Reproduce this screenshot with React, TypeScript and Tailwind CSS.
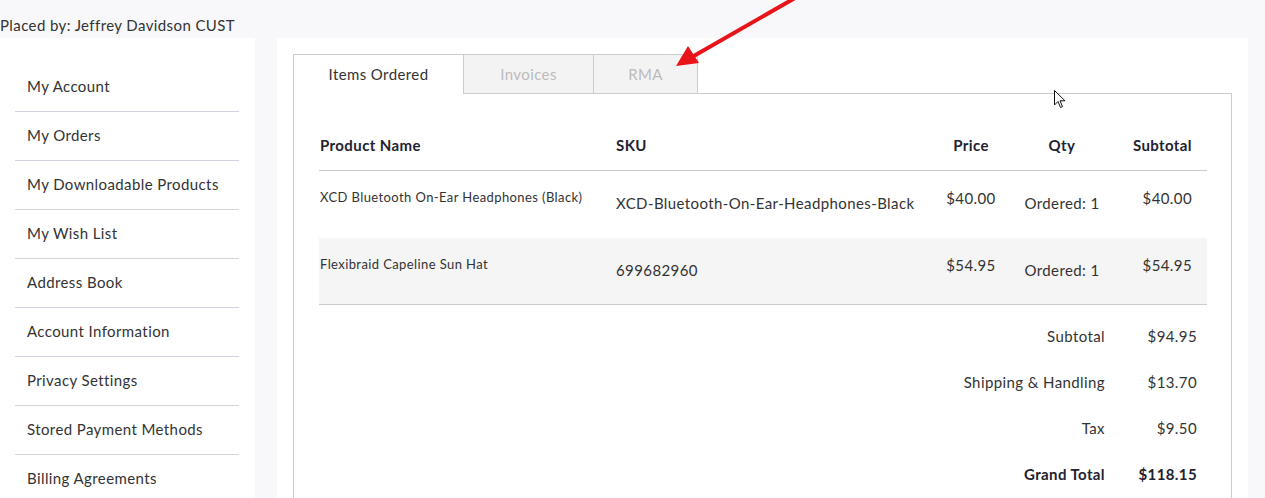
import React from 'react';

const navItems = [
  'My Account',
  'My Orders',
  'My Downloadable Products',
  'My Wish List',
  'Address Book',
  'Account Information',
  'Privacy Settings',
  'Stored Payment Methods',
  'Billing Agreements',
];

const items = [
  { name: 'XCD Bluetooth On-Ear Headphones (Black)', sku: 'XCD-Bluetooth-On-Ear-Headphones-Black', price: '$40.00', qty: 1, subtotal: '$40.00' },
  { name: 'Flexibraid Capeline Sun Hat', sku: '699682960', price: '$54.95', qty: 1, subtotal: '$54.95' },
];

const totals = [
  { label: 'Subtotal', value: '$94.95' },
  { label: 'Shipping & Handling', value: '$13.70' },
  { label: 'Tax', value: '$9.50' },
];

export default function App() {
  return (
    <div className="relative h-[498px] overflow-hidden bg-[#f8f8fa] font-['Lato','Liberation_Sans',sans-serif] tracking-[0.4px] text-[#333]">
      {/* Header */}
      <div className="h-[38px] pt-[16px] text-[15px] leading-[18px] text-[#333]">
        Placed by: Jeffrey Davidson CUST
      </div>

      <div className="flex gap-[22px]">
        {/* Sidebar */}
        <div className="w-[255px] shrink-0 bg-white pt-[25px] pl-[15px] pr-[16px] h-[460px]">
          {navItems.map((n) => (
            <div key={n} className="h-[49px] flex items-center pl-[12px] pb-[1px] border-b border-[#d3d3de] text-[15px] text-[#333]">
              {n}
            </div>
          ))}
        </div>

        {/* Main */}
        <div className="w-[971px] shrink-0 bg-white pt-[16px] px-[16px] h-[460px]">
          <div className="flex h-[40px]">
            <div className="w-[171px] flex items-center justify-center border-l border-t border-r border-[#cccccc] bg-white text-[15px] text-[#333]">
              Items Ordered
            </div>
            <div className="w-[130px] flex items-center justify-center border-t border-r border-b border-[#cccccc] bg-[#f3f3f3] text-[15px] text-[#bbbbbb]">
              Invoices
            </div>
            <div className="w-[104px] flex items-center justify-center border-t border-r border-b border-[#cccccc] bg-[#f3f3f3] text-[15px] text-[#bbbbbb]">
              RMA
            </div>
            <div className="flex-1 border-b border-[#cccccc]" />
          </div>

          <div className="border-l border-r border-[#cccccc] h-[420px] pl-[25px] pr-[24px] pt-[27px]">
            {/* Table header */}
            <div className="grid grid-cols-[297px_314px_82px_100px_95px] h-[50px] items-center border-b border-[#cccccc] text-[15px] font-bold text-[#222230]">
              <div className="pl-[1px]">Product Name</div>
              <div>SKU</div>
              <div className="text-center">Price</div>
              <div className="text-center">Qty</div>
              <div className="text-right pr-[15px]">Subtotal</div>
            </div>

            {items.map((it, i) => (
              <div
                key={it.sku}
                className={
                  'grid grid-cols-[297px_314px_82px_100px_95px] h-[67px] items-start text-[#333] ' +
                  (i === 1 ? 'bg-[#f5f5f5] border-b border-[#cccccc]' : '')
                }
              >
                <div className="pl-[1px] pt-[17px] text-[13px] leading-[18px]">{it.name}</div>
                <div className="pt-[22px] text-[15px] leading-[20px]">{it.sku}</div>
                <div className="pt-[17px] text-center text-[15px] leading-[20px]">{it.price}</div>
                <div className="pt-[22px] text-center text-[15px] leading-[20px]">Ordered: {it.qty}</div>
                <div className="pt-[17px] text-right pr-[15px] text-[15px] leading-[20px]">{it.subtotal}</div>
              </div>
            ))}

            {/* Totals */}
            <div className="pt-[8px] pr-[10px] flex flex-col items-end text-[15px]">
              {totals.map((t) => (
                <div key={t.label} className="flex h-[46px] items-center">
                  <div className="text-right">{t.label}</div>
                  <div className="w-[92px] text-right">{t.value}</div>
                </div>
              ))}
              <div className="flex h-[46px] items-center font-bold text-[#222230]">
                <div className="text-right">Grand Total</div>
                <div className="w-[92px] text-right">$118.15</div>
              </div>
            </div>
          </div>
        </div>
      </div>

      {/* Annotation arrow */}
      <svg className="absolute left-0 top-0 pointer-events-none" width="1265" height="498">
        <line x1="795" y1="-2" x2="692" y2="57" stroke="#e8141a" strokeWidth="4" strokeLinecap="round" />
        <polygon points="676,66 688,46 699,63" fill="#e8141a" />
      </svg>

      {/* Mouse cursor */}
      <svg className="absolute left-[1054px] top-[90px] pointer-events-none" width="13" height="19" viewBox="0 0 13 19">
        <path d="M0.5 0.5 L0.5 15 L4 11.5 L6.5 17.5 L8.5 16.6 L6 10.8 L11 10.8 Z" fill="white" stroke="#111" strokeWidth="1" strokeLinejoin="round" />
      </svg>
    </div>
  );
}
